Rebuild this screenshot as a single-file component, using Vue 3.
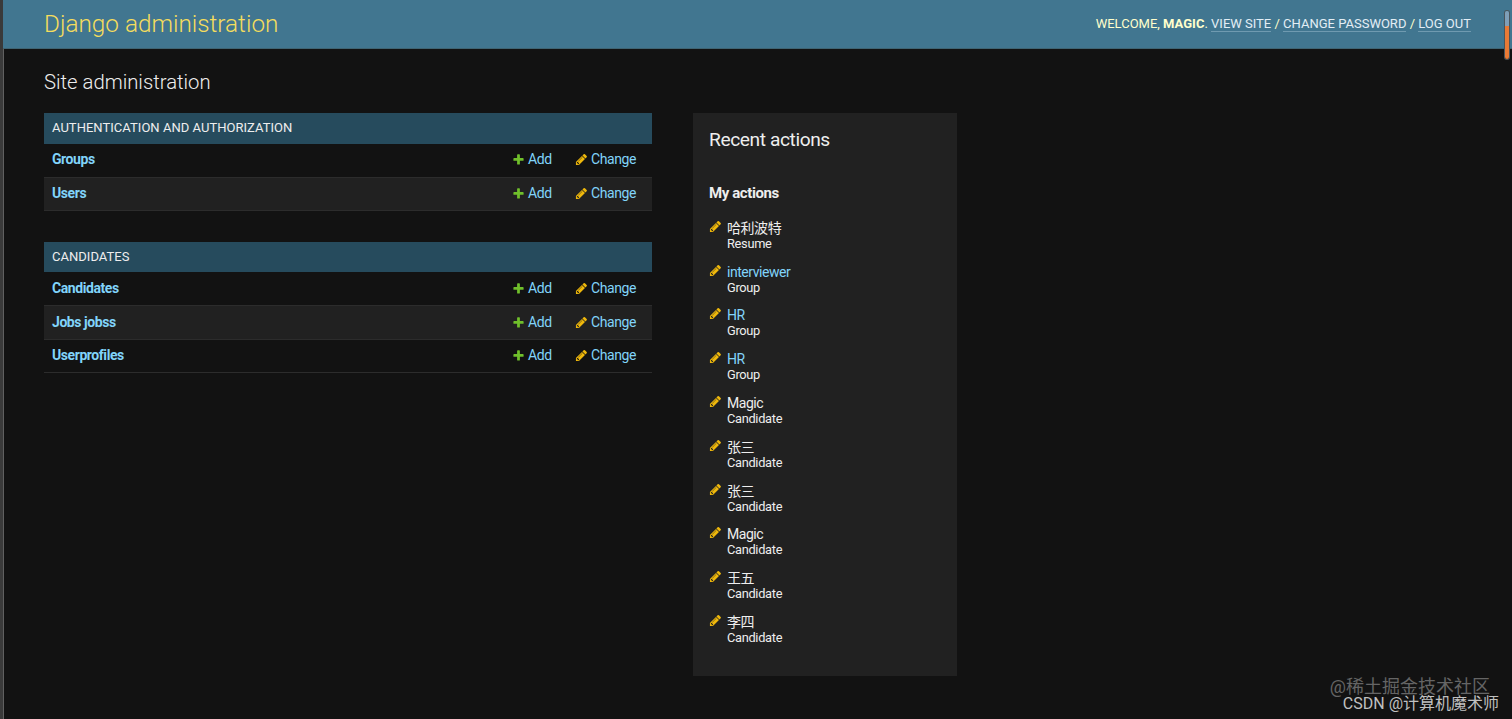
<template>
  <div class="page">
    <header class="header">
      <h1 class="branding">Django administration</h1>
      <div class="user-tools">
        Welcome, <strong>Magic</strong>.
        <a href="#">View site</a> / <a href="#">Change password</a> / <a href="#">Log out</a>
      </div>
    </header>

    <main class="content">
      <h2 class="title">Site administration</h2>
      <div class="columns">
        <div class="apps">
          <section v-for="app in apps" :key="app.name" class="module">
            <h3 class="caption">{{ app.name }}</h3>
            <div v-for="model in app.models" :key="model" class="row">
              <a href="#" class="model">{{ model }}</a>
              <a href="#" class="add">
                <svg class="icon" viewBox="0 0 1792 1792"><path fill="#70bf2b" :d="plusPath" /></svg>
                <span>Add</span>
              </a>
              <a href="#" class="change">
                <svg class="icon" viewBox="0 0 1792 1792"><path fill="#efb80b" :d="pencilPath" /></svg>
                <span>Change</span>
              </a>
            </div>
          </section>
        </div>

        <aside class="recent">
          <h2 class="recent-title">Recent actions</h2>
          <h3 class="recent-subtitle">My actions</h3>
          <ul class="action-list">
            <li v-for="(action, i) in actions" :key="i" class="action">
              <svg class="icon" viewBox="0 0 1792 1792"><path fill="#efb80b" :d="pencilPath" /></svg>
              <div class="action-text">
                <a v-if="action.link" href="#" class="action-name">{{ action.name }}</a>
                <span v-else class="action-name">{{ action.name }}</span>
                <span class="action-type">{{ action.type }}</span>
              </div>
            </li>
          </ul>
        </aside>
      </div>
    </main>

    <div class="scroll-thumb"></div>
    <div class="mark mark-community">@稀土掘金技术社区</div>
    <div class="mark mark-author">CSDN @计算机魔术师</div>
  </div>
</template>

<script setup>
const apps = [
  { name: 'Authentication and Authorization', models: ['Groups', 'Users'] },
  { name: 'Candidates', models: ['Candidates', 'Jobs jobss', 'Userprofiles'] }
]

const actions = [
  { name: '哈利波特', type: 'Resume' },
  { name: 'interviewer', type: 'Group', link: true },
  { name: 'HR', type: 'Group', link: true },
  { name: 'HR', type: 'Group', link: true },
  { name: 'Magic', type: 'Candidate' },
  { name: '张三', type: 'Candidate' },
  { name: '张三', type: 'Candidate' },
  { name: 'Magic', type: 'Candidate' },
  { name: '王五', type: 'Candidate' },
  { name: '李四', type: 'Candidate' }
]

const plusPath = 'M1600 796v192q0 40-28 68t-68 28h-416v416q0 40-28 68t-68 28h-192q-40 0-68-28t-28-68v-416h-416q-40 0-68-28t-28-68v-192q0-40 28-68t68-28h416v-416q0-40 28-68t68-28h192q40 0 68 28t28 68v416h416q40 0 68 28t28 68z'
const pencilPath = 'M491 1536l91-91-235-235-91 91v107h128v128h107zm523-928q0-22-22-22-10 0-17 7l-542 542q-7 7-7 17 0 22 22 22 10 0 17-7l542-542q7-7 7-17zm-54-192l416 416-832 832h-416v-416zm683 96q0 53-37 90l-166 166-416-416 166-165q36-38 90-38 53 0 91 38l235 234q37 39 37 91z'
</script>

<style>
body {
  margin: 0;
  background: #121212;
}
</style>

<style scoped>
.page {
  position: relative;
  box-sizing: border-box;
  height: 719px;
  overflow: hidden;
  border-left: 3px solid #3a3a3a;
  box-shadow: inset 1px 0 0 #606060;
  background: #121212;
  color: #eee;
  font-family: Roboto, 'Noto Sans CJK SC', sans-serif;
  font-size: 14px;
}

h1,
h2,
h3,
ul {
  margin: 0;
  padding: 0;
}

a {
  color: #81d4fa;
  text-decoration: none;
}

.header {
  display: flex;
  align-items: center;
  justify-content: space-between;
  box-sizing: border-box;
  height: 49px;
  padding: 0 41px;
  border-bottom: 1px solid #3f6473;
  background: #417690;
  color: #ffc;
}

.branding {
  color: #f5dd5d;
  font-size: 24.3px;
  font-weight: 300;
  line-height: 28px;
}

.user-tools {
  padding-bottom: 2px;
  font-size: 13px;
  line-height: 15px;
  text-transform: uppercase;
}

.user-tools a {
  border-bottom: 1px solid #6f9ab0;
  color: #e3eef5;
}

.content {
  padding: 21px 41px 0;
}

.title {
  margin-bottom: 18.4px;
  font-size: 20.3px;
  font-weight: 300;
  line-height: 25px;
}

.columns {
  display: flex;
  align-items: flex-start;
  gap: 41px;
}

.apps {
  width: 608px;
}

.module {
  margin-bottom: 30.4px;
}

.caption {
  height: 30.6px;
  padding: 0 8px;
  background: #264b5d;
  font-size: 13px;
  font-weight: 400;
  letter-spacing: 0.03px;
  line-height: 30.6px;
  text-transform: uppercase;
}

.row {
  display: flex;
  align-items: flex-start;
  box-sizing: border-box;
  height: 33.7px;
  padding: 7.5px 8px 0;
  border-bottom: 1px solid #2c2c2c;
  letter-spacing: -0.43px;
  line-height: 17px;
}

.row:nth-child(odd) {
  background: #212121;
}

.model {
  flex: 1;
  font-weight: 700;
}

.add,
.change {
  display: flex;
  align-items: center;
}

.add {
  width: 63px;
}

.change {
  width: 69px;
}

.icon {
  flex: none;
  width: 13px;
  height: 13px;
  margin-right: 3px;
}

.recent {
  box-sizing: border-box;
  width: 264px;
  height: 562.5px;
  padding: 16px;
  background: #212121;
}

.recent-title {
  margin-bottom: 32px;
  font-size: 19.2px;
  font-weight: 400;
  letter-spacing: -0.42px;
  line-height: 22px;
}

.recent-subtitle {
  margin-bottom: 16.5px;
  font-size: 15px;
  font-weight: 700;
  letter-spacing: -0.4px;
  line-height: 20px;
}

.action-list {
  list-style: none;
}

.action {
  display: flex;
  height: 43.8px;
}

.action .icon {
  margin-right: 5px;
}

.action-text {
  display: flex;
  flex-direction: column;
}

.action-name {
  height: 16px;
  letter-spacing: -0.45px;
  line-height: 16px;
}

.action-type {
  font-size: 12.8px;
  letter-spacing: -0.3px;
  line-height: 16px;
}

.scroll-thumb {
  position: absolute;
  top: 11px;
  right: 3px;
  width: 4px;
  height: 48px;
  border-radius: 3px;
  background: linear-gradient(#7f9fb8 0 15px, #e97a35 15px);
  box-shadow: 0 0 0 1px #4a555b;
}

.mark {
  position: absolute;
  white-space: nowrap;
}

.mark-community {
  right: 22px;
  bottom: 20px;
  color: #656565;
  font-size: 18px;
  line-height: 24px;
}

.mark-author {
  right: 13px;
  bottom: 4px;
  color: #c0c0c0;
  font-size: 16px;
  line-height: 22px;
}
</style>
